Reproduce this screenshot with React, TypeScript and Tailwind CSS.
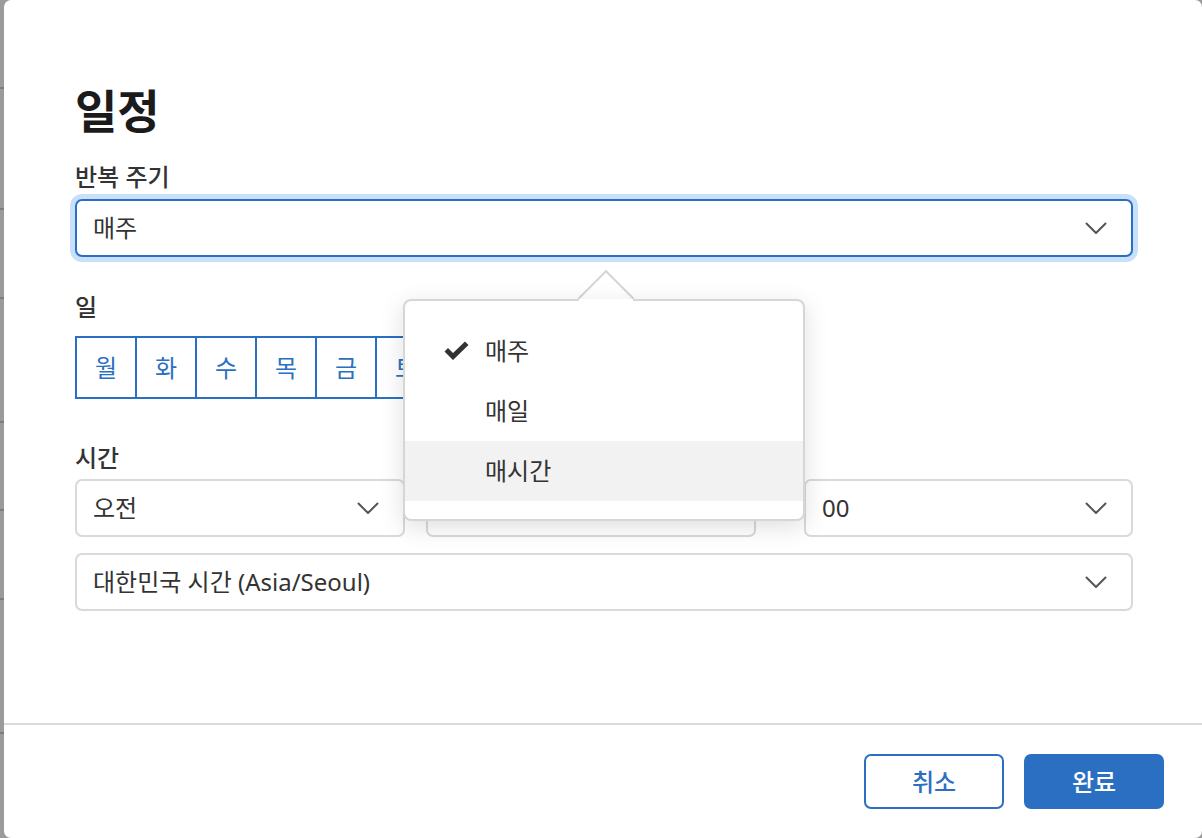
import React from "react";

const BLUE = "#2b6fc3";

function Chevron() {
  return (
    <svg width="22" height="13" viewBox="0 0 22 13" fill="none" className="shrink-0">
      <path d="M1.5 1.5L11 11L20.5 1.5" stroke="#555" strokeWidth="2" strokeLinecap="round" strokeLinejoin="round" />
    </svg>
  );
}

function Check() {
  return (
    <svg width="27" height="20" viewBox="0 0 27 20" className="shrink-0">
      <path d="M1.5 10.5L5 7L10 12L22 0.5L25.5 4L10 19Z" fill="#333" />
    </svg>
  );
}

type SelectBoxProps = { value: string; className?: string };

function SelectBox({ value, className = "" }: SelectBoxProps) {
  return (
    <div
      className={`flex h-[58px] items-center justify-between rounded-[7px] border-2 border-[#d9d9d9] bg-white pl-[16px] pr-[24px] text-[24px] text-[#333] ${className}`}
    >
      <span>{value}</span>
      <Chevron />
    </div>
  );
}

const days = ["월", "화", "수", "목", "금", "토", "일"];
const options = ["매주", "매일", "매시간"];
const bgRows = [89, 121, 89, 124, 88, 89, 134];

export default function App() {
  return (
    <div
      className="flex h-[838px] w-[1202px] overflow-hidden bg-[#9b9b9b]"
      style={{ fontFamily: '"Noto Sans", "Noto Sans CJK KR", sans-serif' }}
    >
      {/* page behind the overlay */}
      <div className="flex w-[4px] shrink-0 flex-col">
        {bgRows.map((h, i) => (
          <div key={i} className="border-b-2 border-[#7d7d7d]" style={{ height: h }} />
        ))}
      </div>

      <div className="flex flex-1 flex-col rounded-[7px] bg-white">
        <div className="flex flex-1 flex-col pl-[71px] pr-[69px] pt-[85px]">
          <h1 className="text-[46px] font-bold leading-[50px] text-[#1b1b1b]">일정</h1>

          <p className="mt-[28px] text-[24px] font-medium leading-[28px] text-[#333]">반복 주기</p>
          <div className="relative mt-[8px]">
            <div className="flex h-[58px] items-center justify-between rounded-[7px] border-2 border-[#2b6fc3] bg-white pl-[16px] pr-[24px] text-[24px] text-[#333] ring-[5px] ring-[#c8e0fa]">
              <span>매주</span>
              <Chevron />
            </div>

            {/* open dropdown */}
            <div className="absolute left-[328px] top-[100px] z-10 h-[222px] w-[402px]">
              <div className="absolute left-[183px] top-[-21px] h-[40px] w-[40px] rotate-45 border-l-2 border-t-2 border-[#d6d6d6] bg-white" />
              <div className="relative h-full rounded-[8px] border-2 border-[#d6d6d6] bg-white pt-[20px] shadow-[0_6px_24px_rgba(0,0,0,0.13)]">
                <div className="absolute left-[174px] top-[-2px] h-[4px] w-[54px] bg-white" />
                {options.map((o, i) => (
                  <div
                    key={o}
                    className={`flex h-[60px] items-center text-[24px] text-[#333] ${i === 2 ? "bg-[#f2f2f2]" : ""}`}
                  >
                    <div className="flex w-[80px] justify-end pr-[15px]">{i === 0 && <Check />}</div>
                    <span>{o}</span>
                  </div>
                ))}
              </div>
            </div>
          </div>

          <p className="mt-[36px] text-[24px] font-medium leading-[28px] text-[#333]">일</p>
          <div className="mt-[15px] flex">
            {days.map((d, i) => (
              <div
                key={d}
                className={`flex h-[63px] items-center justify-center border-y-2 border-l-2 border-[#2b6fc3] text-[24px] text-[#2b6fc3] ${
                  i === days.length - 1 ? "w-[62px] border-r-2" : "w-[60px]"
                }`}
              >
                {d}
              </div>
            ))}
          </div>

          <p className="mt-[45px] text-[24px] font-medium leading-[28px] text-[#333]">시간</p>
          <div className="mt-[7px] flex">
            <SelectBox value="오전" className="w-[330px]" />
            <SelectBox value="" className="ml-[21px] w-[330px]" />
            <SelectBox value="00" className="ml-[48px] flex-1" />
          </div>
          <SelectBox value="대한민국 시간 (Asia/Seoul)" className="mt-[16px]" />
        </div>

        <div className="h-[2px] bg-[#dadada]" />
        <div className="flex justify-end gap-[20px] pb-[29px] pr-[38px] pt-[29px]">
          <button
            className="h-[55px] w-[140px] rounded-[7px] border-2 text-[24px] font-medium"
            style={{ borderColor: BLUE, color: BLUE }}
          >
            취소
          </button>
          <button className="h-[55px] w-[140px] rounded-[7px] bg-[#2b6fc3] text-[24px] font-medium text-white">
            완료
          </button>
        </div>
      </div>
    </div>
  );
}
